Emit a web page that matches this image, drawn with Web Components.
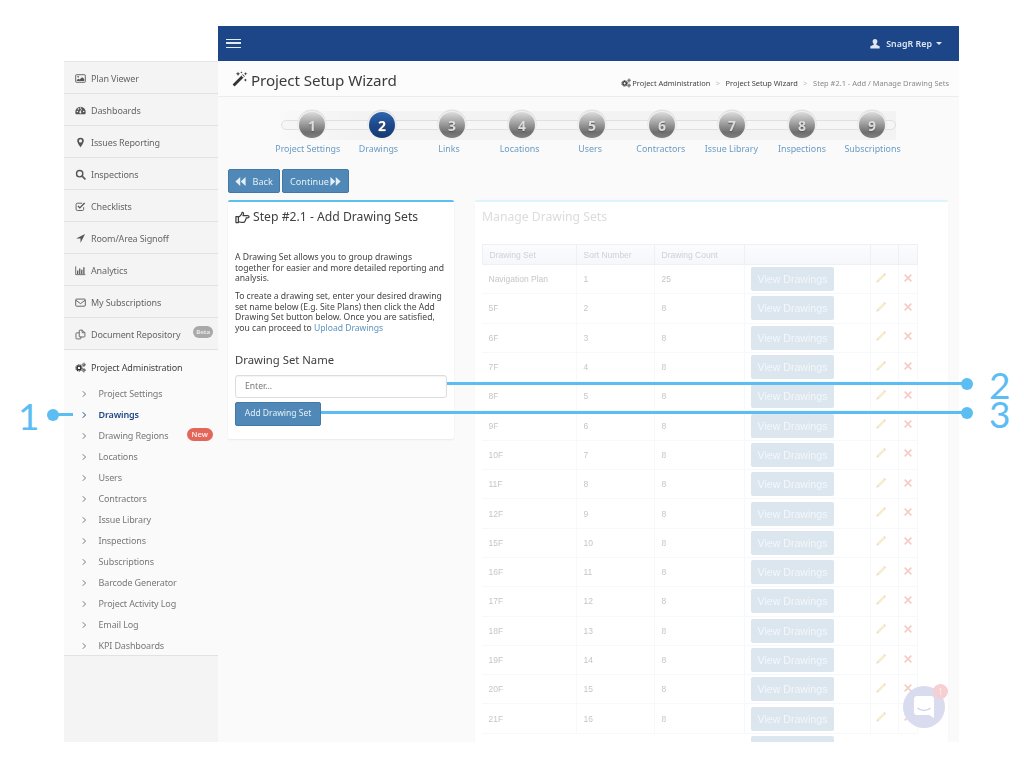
<!DOCTYPE html>
<html lang="en"><head><meta charset="utf-8"><title>Project Setup Wizard</title>
<style>
html,body{margin:0;background:#fff}
body{font-family:"Noto Sans","Liberation Sans",sans-serif;width:1024px;height:768px;overflow:hidden;position:relative}
</style></head><body>
<app-frame>
  <side-nav slot="side"></side-nav>
  <top-bar slot="main"></top-bar>
  <page-head slot="main"></page-head>
  <wizard-steps slot="main"></wizard-steps>
  <wizard-actions slot="main"></wizard-actions>
  <div slot="main" style="display:flex;gap:21px;padding:7px 11px 0 10px;align-items:flex-start">
    <step-card></step-card>
    <sets-card></sets-card>
  </div>
</app-frame>
<chat-bubble></chat-bubble>
<call-out n="1" len="20" style="left:53px;top:394px"></call-out>
<call-out n="2" len="520" style="left:447px;top:363px"></call-out>
<call-out n="3" len="646" style="left:321px;top:392px"></call-out>

<script>
const I={
picture:'<rect x="1" y="2.5" width="14" height="11" rx="1" fill="none" stroke="currentColor" stroke-width="1.3"/><circle cx="4.6" cy="5.6" r="1.2" fill="currentColor"/><path d="M2.6 11.8v-1.6l2.4-1.8 1.6 1.2 3.8-3.6 3 2.8v3z" fill="currentColor"/>',
dash:'<path fill-rule="evenodd" d="M8 2.4a7.6 7.6 0 0 0-7.6 7.6c0 1.3.3 2.5.9 3.4h13.4c.6-.9.9-2.1.9-3.4A7.6 7.6 0 0 0 8 2.4zM3.4 10.6a1.1 1.1 0 1 1 0-2.2 1.1 1.1 0 0 1 0 2.2zM5 6.8a1.1 1.1 0 1 1 0-2.2 1.1 1.1 0 0 1 0 2.2zM8 5.5a1.1 1.1 0 1 1 0-2.2 1.1 1.1 0 0 1 0 2.2zM9 11.6a1.5 1.5 0 1 1-1.4-2.4l1.5-3.7.9.4-1.4 3.7c.4.3.6.7.6 1.2zM12.6 10.6a1.1 1.1 0 1 1 0-2.2 1.1 1.1 0 0 1 0 2.2z"/>',
pin:'<path fill-rule="evenodd" d="M8 1a4.8 4.8 0 0 0-4.8 4.8C3.2 8.6 8 15 8 15s4.8-6.4 4.8-9.2A4.8 4.8 0 0 0 8 1zm0 7a2.3 2.3 0 1 1 0-4.6A2.3 2.3 0 0 1 8 8z"/>',
search:'<circle cx="6.8" cy="6.8" r="4.6" fill="none" stroke="currentColor" stroke-width="2"/><path d="M10.2 10.2l4.2 4.2" stroke="currentColor" stroke-width="2.4" stroke-linecap="round"/>',
check:'<path d="M12.6 9v3a1.8 1.8 0 0 1-1.8 1.8H3.4A1.8 1.8 0 0 1 1.6 12V5a1.8 1.8 0 0 1 1.8-1.8h7" fill="none" stroke="currentColor" stroke-width="1.3"/><path d="M4.4 7.4l2.6 2.6 7-7" fill="none" stroke="currentColor" stroke-width="2"/>',
arrow:'<path d="M14.6 1.4L1.6 8h6.4v6.4z"/>',
bars:'<path d="M1 2v12h14" fill="none" stroke="currentColor" stroke-width="1.2"/><path d="M3 8h1.8v5H3zM6 5h1.8v8H6zM9 7h1.8v6H9zM12 3.4h1.8V13H12z"/>',
mail:'<rect x="1" y="3" width="14" height="10.4" rx="1.4" fill="none" stroke="currentColor" stroke-width="1.3"/><path d="M1.4 4.8L8 9.6l6.6-4.8" fill="none" stroke="currentColor" stroke-width="1.3"/>',
files:'<path d="M6 5.6H2.4A1 1 0 0 0 1.4 6.6v6.8a1 1 0 0 0 1 1h5.2a1 1 0 0 0 1-1V11" fill="none" stroke="currentColor" stroke-width="1.2"/><path d="M6.2 2.6a1 1 0 0 1 1-1h3.4l3.8 3.8v5.2a1 1 0 0 1-1 1h-6.200a1 1 0 0 1-1-1zM10.400 1.800v3.600h3.800" fill="none" stroke="currentColor" stroke-width="1.2"/>',
cogs:'<g fill="none" stroke="currentColor"><circle cx="5.8" cy="8.6" r="2.8" stroke-width="2.2"/><circle cx="5.8" cy="8.6" r="4.5" stroke-width="1.6" stroke-dasharray="1.7 1.1"/><circle cx="12.800" cy="4" r="1.300" stroke-width="1.300"/><circle cx="12.800" cy="4" r="2.500" stroke-width="1" stroke-dasharray="1 .8"/><circle cx="12.800" cy="12" r="1.300" stroke-width="1.300"/><circle cx="12.800" cy="12" r="2.500" stroke-width="1" stroke-dasharray="1 .8"/></g>',
chev:'<path d="M5.500 2.500L11 8l-5.500 5.500" fill="none" stroke="currentColor" stroke-width="2"/>',
user:'<path d="M8 1.200c-2 0-3.200 1.500-3.200 3.500 0 1.300.5 2.500 1.400 3.200v1.200l-4.400 2V14h12.400v-2.900l-4.400-2V7.900c.9-.7 1.400-1.900 1.400-3.200 0-2-1.200-3.500-3.200-3.500z"/>',
wand:'<path d="M.6 13.400L10.800 3.200l2 2L2.600 15.400z"/><path d="M9.300 4.700l2 2 .9-.9-2-2z" fill="#fff"/><path d="M6 .6l.6 1.600 1.600.6-1.600.6L6 5 5.400 3.400 3.800 2.800l1.600-.6zM13.600 1l.5 1.200 1.200.5-1.200.5-.5 1.200-.5-1.200-1.200-.5 1.200-.5zM13.400 7.400l.5 1.200 1.200.5-1.200.5-.5 1.200-.5-1.200-1.200-.5 1.200-.5zM9.400.2l.3.9.9.3-.9.3-.3.9-.3-.9-.9-.3.9-.3z"/>',
hand:'<path d="M1 7h2.600v6.400H1zM3.600 7.600c1.300-.3 2.200-1.400 3-2.600.5-.8.7-1.700 1-2.400.8-.3 1.700.4 1.500 1.700-.1.600-.4 1.100-.6 1.600h5c.9 0 1.500.6 1.500 1.300s-.6 1.300-1.500 1.300h-1.600c.2.800-.1 1.400-.6 1.700.1.800-.2 1.300-.7 1.600 0 1-.6 1.400-1.500 1.400H7c-1.300 0-2.100-.8-3.400-.9z" fill="none" stroke="currentColor" stroke-width="1.300" stroke-linejoin="round"/>',
back:'<path d="M7.600 1.500v13L.6 8zM15.400 1.500v13L8.400 8z"/>',
fwd:'<path d="M.6 1.500v13L7.600 8zM8.400 1.500v13L15.400 8z"/>',
pencil:'<path d="M2 14l.8-3.200L11.400 2.200l2.400 2.400-8.600 8.600z" fill="#f8eccb"/><path d="M2 14l.8-3.200 2.400 2.400z" fill="#ddd"/><path d="M11.400 2.200l1-1 2.400 2.400-1 1z" fill="#f3cfc8"/>',
x:'<path d="M2.600 2.600l10.800 10.800M13.400 2.600L2.600 13.400" stroke="currentColor" stroke-width="2.400" fill="none"/>'
};
function def(name,html){customElements.define(name,class extends HTMLElement{
  constructor(){super();this.attachShadow({mode:'open'});if(typeof html!=='function')this.shadowRoot.innerHTML=html}
  connectedCallback(){if(typeof html==='function'&&!this._d){this._d=1;this.shadowRoot.innerHTML=html(this)}}
})}
def('ui-icon',h=>`<style>:host{display:inline-block;width:var(--s,12px);height:var(--s,12px);flex:none;line-height:0}svg{width:100%;height:100%;fill:currentColor;display:block}</style><svg viewBox="0 0 16 16" aria-hidden="true">${I[h.getAttribute('name')]||''}</svg>`);

def('app-frame',`<style>
:host{display:grid;grid-template-columns:154px 741px;width:895px;height:716px;margin:26px 0 0 64px;overflow:hidden;background:#fafafa;filter:blur(.3px)}
.s{background:#fafafa;min-width:0}.m{background:#fafafa;min-width:0;height:716px;overflow:hidden}
</style><div class="s"><slot name="side"></slot></div><div class="m"><slot name="main"></slot></div>`);

def('top-bar',`<style>
:host{display:flex;align-items:center;justify-content:space-between;height:35px;background:#1c4688;color:#dfe6f2;padding:0 17px 0 8px;font-size:8.800px;letter-spacing:.05px;font-weight:600}
.b{display:block;width:15px;height:9.500px;border-top:1.300px solid #e4eaf4;border-bottom:1.300px solid #e4eaf4;position:relative;box-sizing:border-box}
.b:after{content:"";position:absolute;left:0;right:0;top:2.700px;height:1.300px;background:#e4eaf4}
.u{display:flex;align-items:center;gap:5px}.c{width:0;height:0;border:3px solid transparent;border-top-color:#dfe6f2;border-bottom:0;margin-left:-1px}
</style><span class="b"></span><span class="u"><ui-icon name="user" style="--s:12px"></ui-icon><span>SnagR Rep</span><span class="c"></span></span>`);

def('page-head',`<style>
:host{display:flex;align-items:center;justify-content:space-between;height:36px;background:#fcfcfc;border-bottom:1px solid #ececec;box-sizing:border-box;padding:3px 10px 0 14px;color:#444}
h1{font-size:15.200px;font-weight:400;margin:0;display:flex;align-items:center;gap:3px;color:#3c3c3c;letter-spacing:-.1px}
nav{display:flex;align-items:center;font-size:7.450px;color:#444;padding-top:6px}
nav i{font-style:normal;color:#c4c4c4;margin:0 5.500px}nav b{font-weight:400;color:#8a8a8a}
ui-icon{color:#333}
</style><h1><ui-icon name="wand" style="--s:16px;margin-top:-3px"></ui-icon>Project Setup Wizard</h1>
<nav><ui-icon name="cogs" style="--s:10px;margin-right:1px"></ui-icon>Project Administration<i>&gt;</i>Project Setup Wizard<i>&gt;</i><b>Step #2.1 - Add / Manage Drawing Sets</b></nav>`);

def('wizard-step',h=>`<style>
:host{display:block;width:70px;flex:none}
.c{width:26px;height:26px;border-radius:50%;margin:0 auto;box-shadow:0 0 0 1px #f1f1f1,0 -1px 0 1.600px #e2e2e2;display:flex;align-items:center;justify-content:center;font-weight:700;font-size:14px;color:#dedede;text-shadow:0 1px 1px #555;
background:linear-gradient(#dcdcdc,#a5a5a5 40%,#6e6e6e 78%,#808080)}
:host([on]) .c{background:linear-gradient(#2f66ad,#1c4688 55%,#153a75);color:#fff}
</style><div class="c">${h.getAttribute('n')}</div>`);

def('wizard-steps',`<style>
:host{display:block;height:72px;position:relative;box-sizing:border-box;padding-top:15px}
.t{position:absolute;left:63px;top:14px;width:615px;height:29px;background:linear-gradient(90deg,#f9f9f9,#f3f3f3 12%)}
.t:after{content:"";position:absolute;left:0;right:0;top:9px;height:10px;border-radius:5px;background:#f6f6f6;border:1.500px solid #e0e0e0;box-sizing:border-box}
.r{display:flex;margin-left:59px;position:relative}
.l{display:grid;grid-template-columns:repeat(9,70.600px);margin:4px 0 0 54.500px;font-size:8.900px;color:#6a9cc5;text-align:center;white-space:nowrap;position:relative}
</style><div class="t"></div><div class="r">
<wizard-step n="1"></wizard-step><wizard-step n="2" on></wizard-step><wizard-step n="3"></wizard-step><wizard-step n="4"></wizard-step><wizard-step n="5"></wizard-step><wizard-step n="6"></wizard-step><wizard-step n="7"></wizard-step><wizard-step n="8"></wizard-step><wizard-step n="9"></wizard-step></div>
<div class="l"><span>Project Settings</span><span>Drawings</span><span>Links</span><span>Locations</span><span>Users</span><span>Contractors</span><span>Issue Library</span><span>Inspections</span><span>Subscriptions</span></div>`);

def('ui-button',`<style>
:host{display:inline-flex;align-items:center;justify-content:center;gap:4px;height:24px;box-sizing:border-box;background:#5089b7;border:1px solid #4479a6;border-radius:2px;color:#e6eff6;font-size:9.100px;padding:0 9px;white-space:nowrap}
</style><slot></slot>`);

def('wizard-actions',`<style>:host{display:flex;gap:2px;padding:0 0 0 10px;height:24px}</style>
<ui-button style="width:52px"><ui-icon name="back" style="--s:11px"></ui-icon>&nbsp;Back</ui-button><ui-button style="width:67px;gap:1px">Continue<ui-icon name="fwd" style="--s:11px"></ui-icon></ui-button>`);

def('step-card',`<style>
:host{display:block;width:226px;flex:none;height:239px;box-sizing:border-box;background:#fff;border-top:2px solid #5cc0ef;border-radius:2px;box-shadow:0 1px 2px rgba(0,0,0,.07);padding:7px 7px 0;color:#444;font-size:8.600px;line-height:10.500px}
h2{font-size:12.200px;line-height:16px;font-weight:400;margin:0 0 27px;display:flex;align-items:center;gap:3px;color:#3e3e3e}
p{margin:0 0 7.500px;letter-spacing:-.02px}a{color:#5e93bf}
h3{font-size:11.300px;font-weight:400;margin:18.500px 0 7px;line-height:16px;color:#3e3e3e}
.i{height:23px;width:212px;box-sizing:border-box;border:1px solid #ddd;border-radius:3px;color:#777;padding:0 9px;display:flex;align-items:center;margin-bottom:4px;background:#fff;font-size:8.600px;box-shadow:inset 0 1px 1px rgba(0,0,0,.05)}
</style><h2><ui-icon name="hand" style="--s:15px"></ui-icon>Step #2.1 - Add Drawing Sets</h2>
<p>A Drawing Set allows you to group drawings together for easier and more detailed reporting and analysis.</p>
<p>To create a drawing set, enter your desired drawing set name below (E.g. Site Plans) then click the Add Drawing Set button below. Once you are satisfied, you can proceed to <a>Upload Drawings</a></p>
<h3>Drawing Set Name</h3><div class="i">Enter...</div>
<ui-button style="width:86px;padding:0;font-size:8.500px">Add Drawing Set</ui-button>`);

def('set-row',h=>`<style>
:host{display:grid;grid-template-columns:95px 78px 90px 126px 28px 19px;height:29.300px;box-sizing:border-box;border-bottom:1px solid #f7f8fb;font:8.500px "Liberation Sans",sans-serif;color:#c6c6c6}
span{display:flex;align-items:center;padding-left:6.500px;border-right:1px solid #f7f8fb;box-sizing:border-box}
span:first-child{border-left:1px solid #f0f2f7}
.b{height:24px;width:83px;margin-left:-.500px;background:#dbe6ef;border-radius:2px;color:#f4f7fa;font-size:10.600px;display:flex;align-items:center;justify-content:center}
.x{color:#f6c9c2;padding-left:4px}.p{padding-left:4px}
ui-icon{margin-top:-3px}
</style><span>${h.getAttribute('a')}</span><span>${h.getAttribute('b')}</span><span>${h.getAttribute('c')}</span><span><div class="b">View Drawings</div></span><span class="p"><ui-icon name="pencil" style="--s:12px"></ui-icon></span><span class="x"><ui-icon name="x" style="--s:10px"></ui-icon></span>`);

const rows=[['Navigation Plan',1,25],['5F',2,8],['6F',3,8],['7F',4,8],['8F',5,8],['9F',6,8],['10F',7,8],['11F',8,8],['12F',9,8],['15F',10,8],['16F',11,8],['17F',12,8],['18F',13,8],['19F',14,8],['20F',15,8],['21F',16,8]];
def('sets-card',`<style>
:host{display:block;width:473px;flex:none;height:560px;box-sizing:border-box;background:#fff;border-top:2px solid #dff3fc;border-radius:2px;padding:7px 7px 0;box-shadow:0 0 2px rgba(0,0,0,.03)}
h2{font-size:12.200px;line-height:16px;font-weight:400;margin:0 0 19px;color:#dcdcdc}
.h{display:grid;grid-template-columns:95px 78px 90px 126px 28px 19px;height:19px;background:linear-gradient(#fbfcfe,#f5f7fb);border:1px solid #eef0f6;border-width:1px 0;font:8.500px "Liberation Sans",sans-serif;color:#cdd0d9;width:436px}
.h span{display:flex;align-items:center;padding-left:6.500px;border-right:1px solid #eef0f6;box-sizing:border-box}.h span:first-child{border-left:1px solid #eef0f6}
.t{width:436px}.more{height:24px;width:83px;margin:2.500px 0 0 269px;background:#dbe6ef;border-radius:2px}
</style><h2>Manage Drawing Sets</h2><div class="h"><span>Drawing Set</span><span>Sort Number</span><span>Drawing Count</span><span></span><span></span><span></span></div><div class="t">`+rows.map(r=>`<set-row a="${r[0]}" b="${r[1]}" c="${r[2]}"></set-row>`).join('')+`<div class="more"></div></div>`);

def('nav-item',h=>`<style>
:host{display:flex;align-items:center;height:32px;box-sizing:border-box;border-bottom:1px solid #e2e2e2;background:#f4f4f4;padding:1px 5px 0 11px;font-size:9px;letter-spacing:-.13px;color:#666;gap:5px;position:relative;white-space:nowrap}
:host([open]){background:#fafafa;color:#444;border-bottom:0;padding-top:2px}
ui-icon{color:#555}:host([open]) ui-icon{color:#333}
.t{flex:1}.bg{background:#a9a9a9;color:#e9e9e9;font-size:6px;letter-spacing:0;font-weight:700;line-height:12px;padding:0 3px;border-radius:6px;position:relative;top:-2px}
</style><ui-icon name="${h.getAttribute('icon')}" style="--s:11px"></ui-icon><span class="t"><slot></slot></span>${h.hasAttribute('badge')?`<span class="bg">${h.getAttribute('badge')}</span>`:''}`);

def('sub-item',h=>`<style>
:host{display:flex;align-items:center;height:21px;padding:0 5px 0 16px;font-size:9px;letter-spacing:-.13px;color:#787878;white-space:nowrap}
ui-icon{color:#777;margin-right:10.500px}
:host([on]){color:#1c4688;font-weight:600}:host([on]) ui-icon{color:#1c4688}
.t{flex:1}.n{background:#e2675a;color:#fbe9e6;font-size:7.500px;letter-spacing:0;font-weight:600;line-height:13px;padding:0 5px;border-radius:7px;position:relative;top:-1px}
</style><ui-icon name="chev" style="--s:8px"></ui-icon><span class="t"><slot></slot></span>${h.hasAttribute('badge')?`<span class="n">${h.getAttribute('badge')}</span>`:''}`);

def('side-nav',`<style>
:host{display:block;background:#fafafa}
.logo{height:36px;background:#fff;border-bottom:1px solid #e5e5e5;box-sizing:border-box}
.sub{padding-top:1px;border-bottom:1px solid #e2e2e2;height:274px;box-sizing:border-box;background:#fafafa}
.end{height:86px;background:#f4f4f4}
</style><div class="logo"></div>
<nav-item icon="picture">Plan Viewer</nav-item><nav-item icon="dash">Dashboards</nav-item><nav-item icon="pin">Issues Reporting</nav-item><nav-item icon="search">Inspections</nav-item><nav-item icon="check">Checklists</nav-item><nav-item icon="arrow">Room/Area Signoff</nav-item><nav-item icon="bars">Analytics</nav-item><nav-item icon="mail">My Subscriptions</nav-item><nav-item icon="files" badge="Beta">Document Repository</nav-item>
<nav-item icon="cogs" open>Project Administration</nav-item>
<div class="sub"><sub-item>Project Settings</sub-item><sub-item on>Drawings</sub-item><sub-item badge="New">Drawing Regions</sub-item><sub-item>Locations</sub-item><sub-item>Users</sub-item><sub-item>Contractors</sub-item><sub-item>Issue Library</sub-item><sub-item>Inspections</sub-item><sub-item>Subscriptions</sub-item><sub-item>Barcode Generator</sub-item><sub-item>Project Activity Log</sub-item><sub-item>Email Log</sub-item><sub-item>KPI Dashboards</sub-item></div><div class="end"></div>`);

def('chat-bubble',`<style>
:host{position:absolute;left:903px;top:686px;width:42px;height:42px;border-radius:50%;background:#d9dbef;display:block}
.b{position:absolute;right:-3px;top:-2px;width:15px;height:15px;border-radius:50%;background:#f6cfd3;color:#fbeef0;font-size:8px;line-height:15px;text-align:center}
svg{position:absolute;left:11px;top:10px;width:20px;height:22px}
</style><svg viewBox="0 0 20 22"><path d="M3 0h14a3 3 0 0 1 3 3v19l-5-3H3a3 3 0 0 1-3-3V3a3 3 0 0 1 3-3z" fill="#fff"/><path d="M4 12.500c3.500 2.300 8.500 2.300 12 0" fill="none" stroke="#c6c9e6" stroke-width="1.300" stroke-linecap="round"/></svg><span class="b">1</span>`);

def('call-out',h=>{const n=h.getAttribute('n'),len=+h.getAttribute('len'),one=n==='1';
 const dot=one?-6:len-6, digit=one?-35:len+22;
 return `<style>
:host{position:absolute;display:block;height:42px;width:1px;color:#5cbdf2}
.d{position:absolute;font:400 37px/28px Lato,"Noto Sans",sans-serif;top:8px;left:${digit}px}
.l{position:absolute;height:3px;background:currentColor;top:19px;left:0;width:${len}px}
.o{position:absolute;width:12px;height:12px;border-radius:50%;background:currentColor;top:14.500px;left:${dot}px}
</style><span class="l"></span><span class="o"></span><span class="d">${n}</span>`});
</script>
</body></html>
